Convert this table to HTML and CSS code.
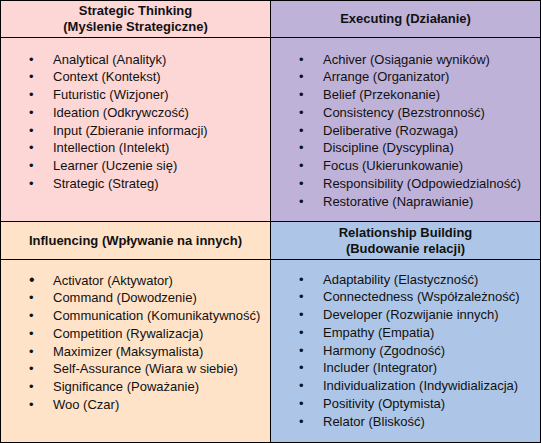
FILE: index.html
```html
<!DOCTYPE html>
<html>
<head>
<title>Strengths Domains</title>
<link rel="stylesheet" href="styles.css">
</head>
<body>

<div class="grid">
  <div class="head pink">Strategic Thinking<br>(Myślenie Strategiczne)</div>
  <div class="head purple">Executing (Działanie)</div>

  <div class="body pink top">
    <ul>
      <li>Analytical (Analityk)</li>
      <li>Context (Kontekst)</li>
      <li>Futuristic (Wizjoner)</li>
      <li>Ideation (Odkrywczość)</li>
      <li>Input (Zbieranie informacji)</li>
      <li>Intellection (Intelekt)</li>
      <li>Learner (Uczenie się)</li>
      <li>Strategic (Strateg)</li>
    </ul>
  </div>
  <div class="body purple top">
    <ul>
      <li>Achiver (Osiąganie wyników)</li>
      <li>Arrange (Organizator)</li>
      <li>Belief (Przekonanie)</li>
      <li>Consistency (Bezstronność)</li>
      <li>Deliberative (Rozwaga)</li>
      <li>Discipline (Dyscyplina)</li>
      <li>Focus (Ukierunkowanie)</li>
      <li>Responsibility (Odpowiedzialność)</li>
      <li>Restorative (Naprawianie)</li>
    </ul>
  </div>

  <div class="head orange">Influencing (Wpływanie na innych)</div>
  <div class="head blue">Relationship Building<br>(Budowanie relacji)</div>

  <div class="body orange bottom">
    <ul>
      <li class="big">Activator (Aktywator)</li>
      <li>Command (Dowodzenie)</li>
      <li>Communication (Komunikatywność)</li>
      <li>Competition (Rywalizacja)</li>
      <li>Maximizer (Maksymalista)</li>
      <li>Self-Assurance (Wiara w siebie)</li>
      <li>Significance (Poważanie)</li>
      <li>Woo (Czar)</li>
    </ul>
  </div>
  <div class="body blue bottom">
    <ul>
      <li>Adaptability (Elastyczność)</li>
      <li>Connectedness (Współzależność)</li>
      <li>Developer (Rozwijanie innych)</li>
      <li>Empathy (Empatia)</li>
      <li>Harmony (Zgodność)</li>
      <li>Includer (Integrator)</li>
      <li>Individualization (Indywidializacja)</li>
      <li>Positivity (Optymista)</li>
      <li>Relator (Bliskość)</li>
    </ul>
  </div>
</div>

</body>
</html>
```

FILE: styles.css
```css
body {
  margin: 0;
  font: 13px "Liberation Sans", Arial, sans-serif;
  color: #111;
}

.grid {
  display: grid;
  grid-template-columns: 269px 269px;
  grid-template-rows: 36px 183px 37px 182px;
  gap: 1px;
  padding: 1px;
  width: 539px;
  background: #000;
}

.pink { background: #fdd6d6; }
.purple { background: #bfb2d9; }
.orange { background: #ffe3c8; }
.blue { background: #adc6e7; }

.head {
  display: flex;
  align-items: center;
  justify-content: center;
  text-align: center;
  font-weight: bold;
  line-height: 16px;
}

.body.top { padding-top: 12.5px; }
.body.bottom { padding-top: 10.5px; }

ul {
  list-style: none;
  margin: 0;
  padding: 0 0 0 28px;
  line-height: 17.75px;
}

li::before {
  content: "\2022";
  display: inline-block;
  width: 24px;
}

li.big::before {
  font-size: 16px;
}
```
